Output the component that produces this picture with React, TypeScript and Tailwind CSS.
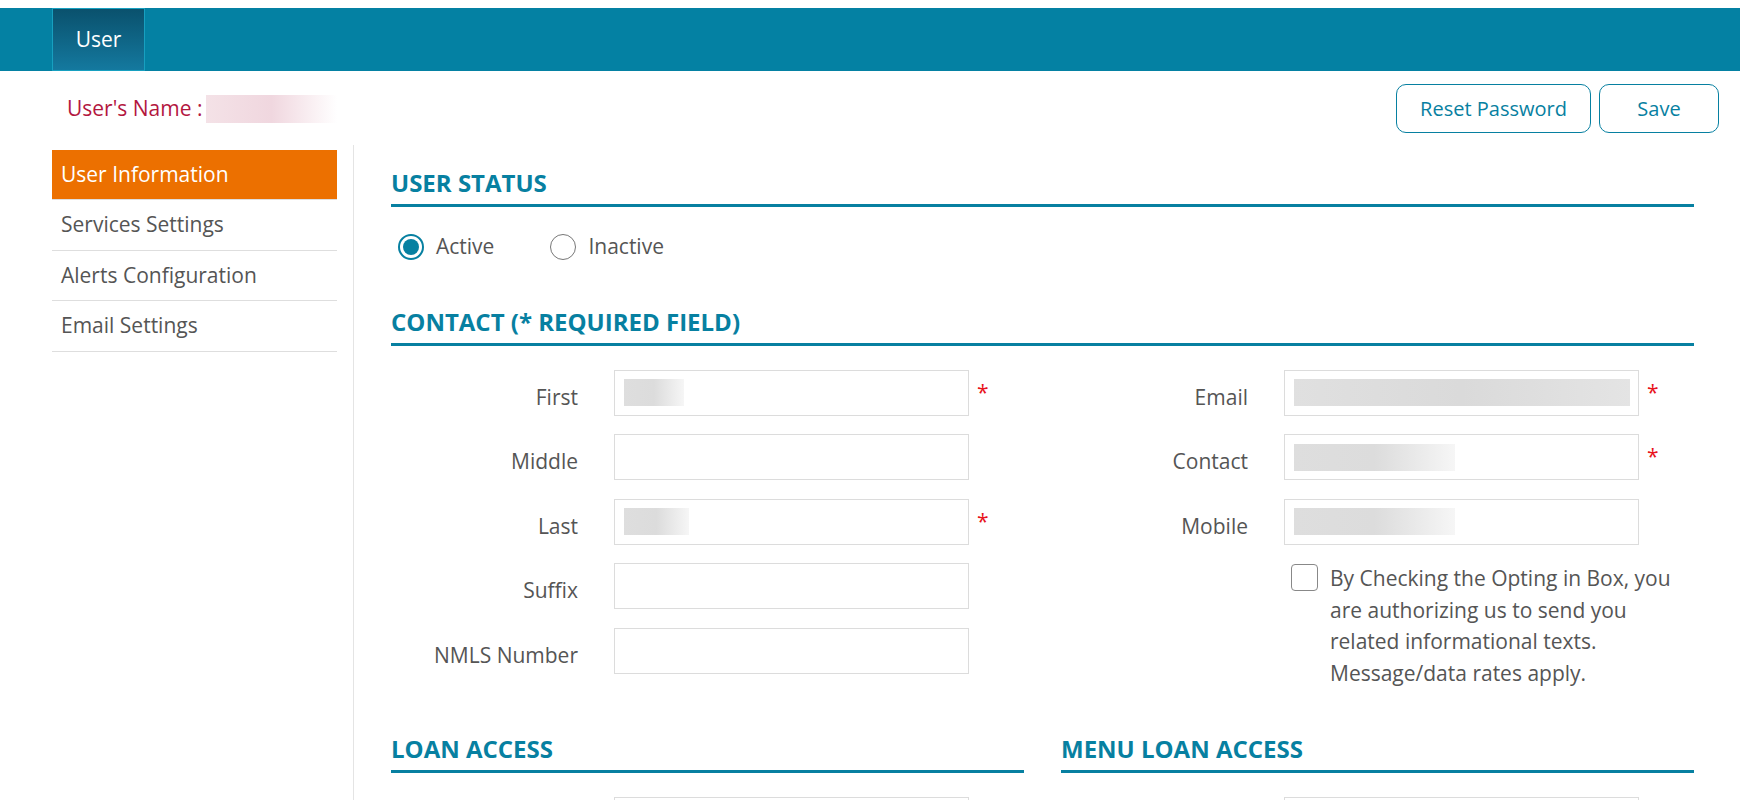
import React, { useState } from 'react';

const sideItems = ['User Information', 'Services Settings', 'Alerts Configuration', 'Email Settings'];

// blurred value stand-ins, as in the screenshot
const Blur: React.FC<{ w: number; fade?: boolean }> = ({ w, fade }) => (
  <div
    className={`h-[27px] ${fade ? 'bg-gradient-to-r from-[#dedede] via-[#dcdcdc] to-[#f6f6f6]' : 'bg-gradient-to-r from-[#e0e0e0] via-[#dadada] to-[#e4e4e4]'}`}
    style={{ width: w }}
  />
);

const Field: React.FC<{ label: string; required?: boolean; value?: React.ReactNode }> = ({ label, required, value }) => (
  <div className="flex items-center">
    <label className="w-[187px] text-right mt-[10px] text-[#555]">{label}</label>
    <div className="ml-[36px] w-[355px] h-[46px] border border-[#dcdcdc] bg-white flex items-center pl-[9px] pr-[8px]">
      {value}
    </div>
    {required && <span className="ml-[8px] text-[#e8121b]">*</span>}
  </div>
);

const SectionTitle: React.FC<{ children: React.ReactNode }> = ({ children }) => (
  <h2 className="text-[24px] leading-[33px] font-bold text-[#0780a1] pb-[5px] border-b-[3px] border-[#0780a1]">
    {children}
  </h2>
);

const App: React.FC = () => {
  const [status, setStatus] = useState<'active' | 'inactive'>('active');
  const [optIn, setOptIn] = useState(false);

  return (
    <div className="min-h-screen bg-white font-['Open_Sans',sans-serif] text-[21px] text-[#555]">
      {/* Top bar */}
      <div className="pt-[8px]">
        <div className="h-[63px] bg-[#0481a3] pl-[52px] flex">
          <div className="w-[93px] h-full border border-[#17a0c0] bg-gradient-to-b from-[#0a516d] to-[#14799f] flex items-center justify-center text-white">
            User
          </div>
        </div>
      </div>

      {/* Name + actions */}
      <div className="flex items-center justify-between pl-[67px] pr-[21px] mt-[13px]">
        <div className="flex items-center text-[#b3173f]">
          <span>User's Name :</span>
          <div className="ml-[4px] w-[131px] h-[28px] bg-gradient-to-r from-[#f4e2e7] via-[#f0d7df] to-white" />
        </div>
        <div className="flex gap-[8px] text-[20px]">
          <button className="w-[195px] h-[49px] rounded-[10px] border border-[#0780a1] text-[#0780a1] bg-white">
            Reset Password
          </button>
          <button className="w-[120px] h-[49px] rounded-[10px] border border-[#0780a1] text-[#0780a1] bg-white">
            Save
          </button>
        </div>
      </div>

      <div className="flex pl-[52px] mt-[12px]">
        {/* Side nav */}
        <nav className="w-[285px] pt-[5px]">
          {sideItems.map((item, i) => (
            <div
              key={item}
              className={`h-[50.4px] flex items-center pl-[9px] border-b border-[#dedede] ${i === 0 ? 'bg-[#ec7000] text-white' : 'text-[#555]'}`}
            >
              {item}
            </div>
          ))}
        </nav>

        {/* Main */}
        <main className="ml-[16px] flex-1 border-l border-[#e4e4e4] pl-[37px] pr-[46px] pt-[21px] pb-[40px]">
          <SectionTitle>USER STATUS</SectionTitle>

          <div className="flex items-center mt-[24px] ml-[7px]">
            <label className="flex items-center cursor-pointer" onClick={() => setStatus('active')}>
              <span className={`w-[26px] h-[26px] rounded-full border-2 flex items-center justify-center ${status === 'active' ? 'border-[#0780a1]' : 'border-[#777]'}`}>
                {status === 'active' && <span className="w-[16px] h-[16px] rounded-full bg-[#0780a1]" />}
              </span>
              <span className="ml-[12px]">Active</span>
            </label>
            <label className="flex items-center cursor-pointer ml-[56px]" onClick={() => setStatus('inactive')}>
              <span className={`w-[26px] h-[26px] rounded-full border-[1.5px] flex items-center justify-center ${status === 'inactive' ? 'border-[#0780a1]' : 'border-[#777]'}`}>
                {status === 'inactive' && <span className="w-[16px] h-[16px] rounded-full bg-[#0780a1]" />}
              </span>
              <span className="ml-[12px]">Inactive</span>
            </label>
          </div>

          <div className="mt-[42px]">
            <SectionTitle>CONTACT (* REQUIRED FIELD)</SectionTitle>
          </div>

          <div className="grid grid-cols-2 gap-x-[37px] mt-[24px]">
            <div className="flex flex-col gap-y-[18.5px]">
              <Field label="First" required value={<Blur w={60} fade />} />
              <Field label="Middle" />
              <Field label="Last" required value={<Blur w={65} fade />} />
              <Field label="Suffix" />
              <Field label="NMLS Number" />
            </div>
            <div className="flex flex-col gap-y-[18.5px]">
              <Field label="Email" required value={<Blur w={336} />} />
              <Field label="Contact" required value={<Blur w={161} fade />} />
              <Field label="Mobile" value={<Blur w={161} fade />} />
              <div className="flex items-start pl-[230px]">
                <button
                  onClick={() => setOptIn(!optIn)}
                  className="shrink-0 w-[27px] h-[27px] rounded-[4px] border-[1.5px] border-[#888] bg-white mt-[1px]"
                />
                <p className="ml-[12px] leading-[31.7px] text-[#555]">
                  By Checking the Opting in Box, you are authorizing us to send you related informational texts. Message/data rates apply.
                </p>
              </div>
            </div>
          </div>

          <div className="grid grid-cols-2 gap-x-[37px] mt-[42px]">
            <div>
              <SectionTitle>LOAN ACCESS</SectionTitle>
              <div className="mt-[24px] flex flex-col gap-y-[18.5px]">
                <Field label="" />
              </div>
            </div>
            <div>
              <SectionTitle>MENU LOAN ACCESS</SectionTitle>
              <div className="mt-[24px] flex flex-col gap-y-[18.5px]">
                <Field label="" />
              </div>
            </div>
          </div>
        </main>
      </div>
    </div>
  );
};

export default App;
